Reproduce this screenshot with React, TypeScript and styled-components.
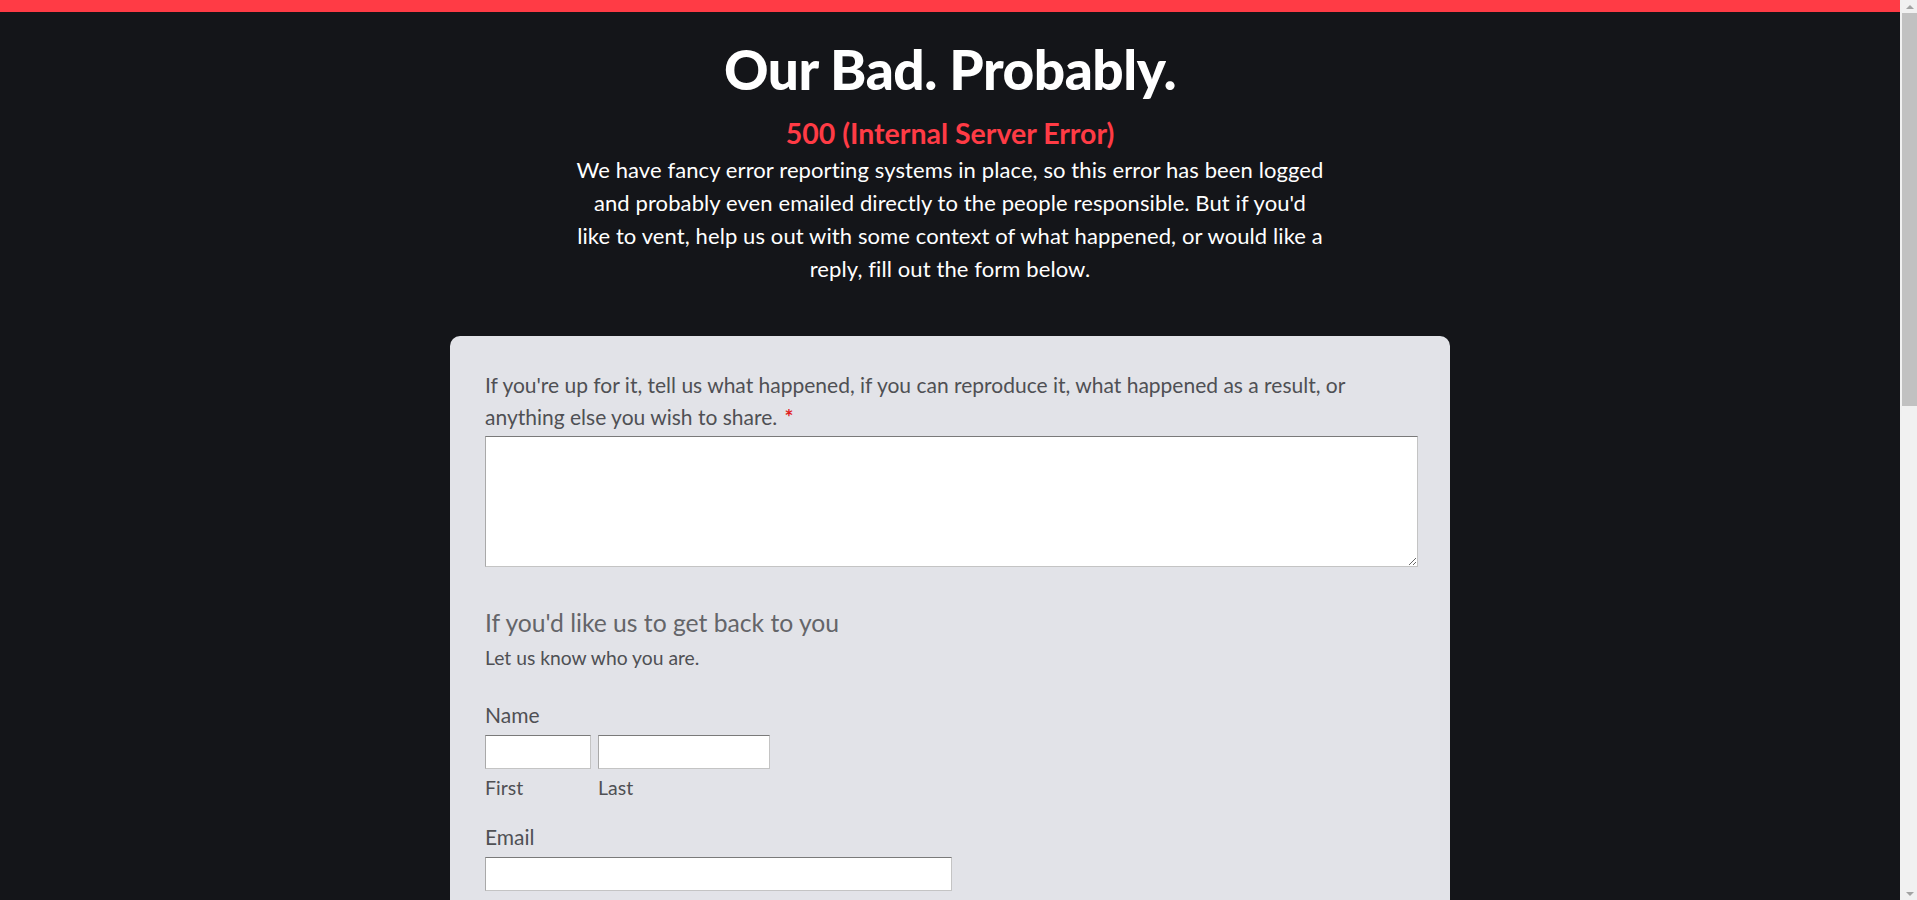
import React from "react";
import styled, { createGlobalStyle } from "styled-components";

const GlobalStyle = createGlobalStyle`
  html, body {
    margin: 0;
    padding: 0;
    background: #141519;
  }
  body {
    font-family: Lato, "Open Sans", Arial, sans-serif;
    padding-right: 17px;
  }
  * { box-sizing: border-box; }
`;

const ScrollBar = styled.div`
  position: fixed;
  top: 0;
  right: 0;
  width: 17px;
  height: 100vh;
  background: #f1f1f1;
  display: flex;
  flex-direction: column;
  align-items: stretch;
  z-index: 10;
`;

const ScrollArrow = styled.div<{ $down?: boolean }>`
  height: 13px;
  display: flex;
  align-items: center;
  justify-content: center;
  padding-left: 2px;
  &::after {
    content: "";
    width: 0;
    height: 0;
    border-left: 4px solid transparent;
    border-right: 4px solid transparent;
    ${(p) =>
      p.$down
        ? "border-top: 4px solid #a3a3a3;"
        : "border-bottom: 4px solid #a3a3a3;"}
  }
`;

const ScrollTrack = styled.div`
  flex: 1;
  padding-left: 2px;
`;

const ScrollThumb = styled.div`
  height: 393px;
  background: #c1c1c1;
`;

const TopBar = styled.div`
  height: 12px;
  background: #ff3b45;
`;

const Header = styled.header`
  display: flex;
  flex-direction: column;
  align-items: center;
  text-align: center;
  padding-top: 24px;
`;

const Title = styled.h1`
  margin: 0;
  font-family: Lato, sans-serif;
  font-weight: 900;
  font-size: 55px;
  line-height: 66px;
  letter-spacing: -0.5px;
  color: #ffffff;
`;

const Code = styled.h2`
  margin: 12px 0 0;
  font-family: Lato, sans-serif;
  font-weight: 700;
  font-size: 28.5px;
  line-height: 39px;
  color: #ff3b45;
`;

const Intro = styled.p`
  margin: 0;
  font-family: Lato, sans-serif;
  font-size: 22px;
  line-height: 33px;
  letter-spacing: 0.1px;
  color: #ffffff;
`;

const Card = styled.main`
  width: 1000px;
  margin: 51px auto 0;
  padding: 33px 32px 120px 35px;
  background: #e2e3e8;
  border-radius: 10px;
  min-height: 1300px;
`;

const Field = styled.div<{ $gap?: number }>`
  display: flex;
  flex-direction: column;
  margin-bottom: ${(p) => p.$gap ?? 0}px;
`;

const Label = styled.label`
  font-family: Lato, sans-serif;
  font-size: 21px;
  line-height: 32px;
  color: #4f5054;
`;

const Required = styled.span`
  margin-left: 2px;
  color: #e0201c;
  font-weight: 700;
`;

const TextArea = styled.textarea`
  display: block;
  width: 100%;
  height: 131px;
  margin-top: 3px;
  background: #fff;
  border: 1px solid;
  border-color: #7a7a7a #c4c4c4 #c4c4c4 #a9a9a9;
  border-radius: 0;
  resize: vertical;
  font-family: Lato, sans-serif;
`;

const SectionTitle = styled.h3`
  margin: 0;
  font-family: Lato, sans-serif;
  font-weight: 400;
  font-size: 24.7px;
  line-height: 32px;
  color: #646569;
`;

const SectionDesc = styled.p`
  margin: 5px 0 0;
  font-family: Lato, sans-serif;
  font-size: 19.3px;
  line-height: 28px;
  color: #4f5054;
`;

const NameRow = styled.div`
  display: flex;
  gap: 7px;
  margin-top: 4px;
`;

const SubField = styled.div`
  display: flex;
  flex-direction: column;
`;

const Input = styled.input<{ $w: number; $mt?: number }>`
  display: block;
  width: ${(p) => p.$w}px;
  height: 34px;
  margin-top: ${(p) => p.$mt ?? 0}px;
  background: #fff;
  border: 1px solid;
  border-color: #7a7a7a #c4c4c4 #c4c4c4 #a9a9a9;
  border-radius: 0;
  padding: 0 4px;
  font-family: Lato, sans-serif;
`;

const SubLabel = styled.label`
  margin-top: 6px;
  font-family: Lato, sans-serif;
  font-size: 19.5px;
  line-height: 26px;
  color: #4f5054;
`;

export default function App() {
  return (
    <>
      <GlobalStyle />
      <ScrollBar>
        <ScrollArrow />
        <ScrollTrack>
          <ScrollThumb />
        </ScrollTrack>
        <ScrollArrow $down />
      </ScrollBar>
      <TopBar />
      <Header>
        <Title>Our Bad. Probably.</Title>
        <Code>500 (Internal Server Error)</Code>
        <Intro>
          We have fancy error reporting systems in place, so this error has been logged
          <br />
          and probably even emailed directly to the people responsible. But if you'd
          <br />
          like to vent, help us out with some context of what happened, or would like a
          <br />
          reply, fill out the form below.
        </Intro>
      </Header>
      <Card>
        <Field $gap={40}>
          <Label>
            If you're up for it, tell us what happened, if you can reproduce it, what
            happened as a result, or anything else you wish to share.{" "}
            <Required>*</Required>
          </Label>
          <TextArea />
        </Field>
        <Field $gap={27}>
          <SectionTitle>If you'd like us to get back to you</SectionTitle>
          <SectionDesc>Let us know who you are.</SectionDesc>
        </Field>
        <Field $gap={20}>
          <Label>Name</Label>
          <NameRow>
            <SubField>
              <Input $w={106} />
              <SubLabel>First</SubLabel>
            </SubField>
            <SubField>
              <Input $w={172} />
              <SubLabel>Last</SubLabel>
            </SubField>
          </NameRow>
        </Field>
        <Field>
          <Label>Email</Label>
          <Input $w={467} $mt={4} />
        </Field>
      </Card>
    </>
  );
}
